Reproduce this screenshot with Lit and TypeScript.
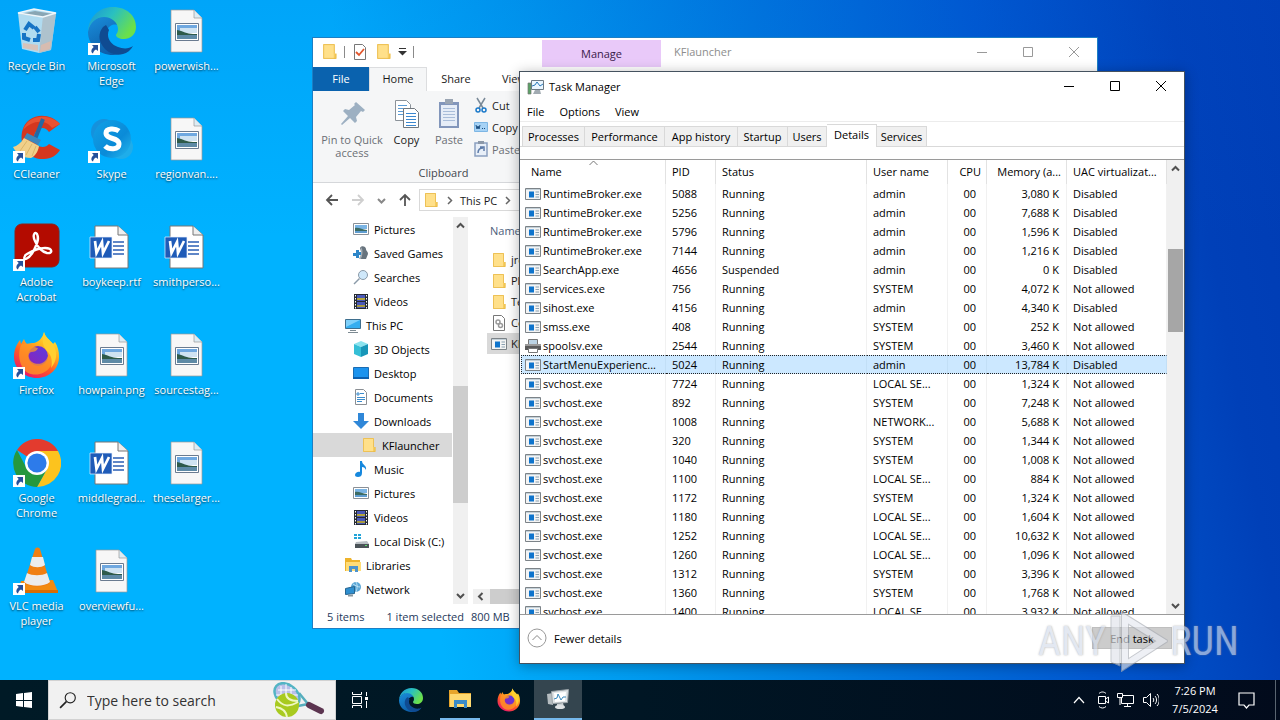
import { LitElement, html, css, svg } from "lit";
import { customElement } from "lit/decorators.js";
import { classMap } from "lit/directives/class-map.js";

const shared = css`
  * { box-sizing: border-box; }
  button, a, input {
    font: inherit; color: inherit; background: none; border: 0; margin: 0; padding: 0;
    text-decoration: none; outline: none;
  }
  svg { display: block; flex: none; }
`;

const pic = (w: number, h: number, body: unknown, vw = w, vh = h) => html`
  <svg width=${w} height=${h} viewBox="0 0 ${vw} ${vh}" fill="none" aria-hidden="true">${body}</svg>`;

/* ---------- application logos, drawn on a 48 unit grid ---------- */
const edge = (s: number) => pic(s, s, svg`
  <defs>
    <linearGradient id="e1" x1="0" y1="0" x2="1" y2=".5"><stop offset="0" stop-color="#1a92d8"/><stop offset=".5" stop-color="#29c0c0"/><stop offset="1" stop-color="#6be04a"/></linearGradient>
    <linearGradient id="e2" x1="0" y1="0" x2=".6" y2="1"><stop offset="0" stop-color="#1a8fdc"/><stop offset="1" stop-color="#0c59a4"/></linearGradient>
  </defs>
  <path fill="url(#e2)" d="M0 25C1 14 10 9 19 9c10 0 15 6 15 11-2-2-6-3-10-2-5 2-7 8-5 14 2 8 9 12 17 11 3 0 6-1 8-3-4 5-11 8-19 8C11 48 0 38 0 25z"/>
  <path fill="#0f4b92" d="M15 20c-4 5-5 12-1 18 4 7 12 11 21 9 4-1 8-4 10-8-4 3-10 3-15 1-8-3-12-10-9-17l-3-5z"/>
  <path fill="url(#e1)" d="M0 24C1 10 11 0 25 0c14 0 23 9 23 20 0 8-6 12-12 12-5 0-8-2-8-4 0-1 2-2 2-6 0-6-6-12-14-12C8 10 2 16 0 24z"/>`, 48, 48);

const firefox = (s: number) => pic(s, s, svg`
  <defs>
    <linearGradient id="f1" x1=".9" y1="0" x2=".3" y2="1"><stop offset="0" stop-color="#fff13d"/><stop offset=".35" stop-color="#ffb41f"/><stop offset=".65" stop-color="#ff5a26"/><stop offset="1" stop-color="#e9166c"/></linearGradient>
    <linearGradient id="f2" x1="1" y1="0" x2="0" y2="1"><stop offset="0" stop-color="#5a3de0"/><stop offset="1" stop-color="#8d22b9"/></linearGradient>
  </defs>
  <path fill="url(#f1)" d="M31 1c1 5 6 8 9 12l2-2c3 5 4 9 4 15 0 12-10 21-22 21S1 38 1 26C1 18 4 13 7 9l1 4 3-5c1 3 2 4 3 5 2-1 5-1 7-1 4-1 9-5 10-11z"/>
  <circle cx="25" cy="25" r="10" fill="url(#f2)"/>
  <path fill="#ff9a24" d="M8 14c3-2 8-1 11 0 2 1 4 3 6 3-1 3-4 4-7 4-2 1-3 3-2 6 2 6 11 8 16 3 4-4 4-9 2-12 5 4 7 11 3 18-4 6-12 9-19 7C9 41 3 27 8 14z" opacity=".75"/>
  <path fill="#ffcf30" d="M31 1c1 5 6 8 9 12 5 8 4 17-2 24 2-8 0-13-4-17-3-4-6-8-3-19z"/>`, 48, 48);

const chrome = () => pic(48, 48, svg`
  <path fill="#e33b2e" d="M24 24 4 11a24 24 0 0 1 41 1H24z"/>
  <path fill="#fcc31e" d="M24 12h21a24 24 0 0 1-21 36l10-18z"/>
  <path fill="#25983f" d="M4 11a24 24 0 0 0 20 37l10-18-20 0z"/>
  <circle cx="24" cy="24" r="12" fill="#fff"/><circle cx="24" cy="24" r="9.600" fill="#2d7bea"/>`);

const recycle = () => pic(48, 48, svg`
  <path fill="#dce8ee" opacity=".8" d="m5 6 16-4 22 4-5 37-12 3-17-4z"/>
  <path fill="#aebfc9" opacity=".9" d="m30 9 13-3-5 37-12 3z"/>
  <path fill="#7f98a5" opacity=".8" d="M7 7 22 4l18 3-11 3z"/>
  <path stroke="#eef6fa" stroke-width="1.500" d="M5 6 21 2l22 4-13 4z"/>
  <path fill="#e8b9a4" opacity=".7" d="m10 36 15 2v6l-15-3zM28 38l10-4-1 8-10 3z"/>
  <path stroke="#1673c4" stroke-width="4" d="m12 23 4-6 5 4M11 26l0 5 6 2M20 33h5l1-6M22 20l4 5"/>`);

const ccleaner = () => pic(48, 48, svg`
  <path fill="#d5371f" d="M47 9C36-4 13-2 9 17c-3 17 9 28 22 27 7 0 13-4 16-9l-11-6c-4 5-14 4-15-6 0-9 10-14 15-6z"/>
  <path fill="#ef5e3b" d="M47 9C37-2 15-1 10 15c8-9 22-12 29-2z" opacity=".7"/>
  <path stroke="#2468a4" stroke-width="4" d="M30 4 22 24"/>
  <path fill="#3d87bd" d="m14 18 14 7-3 5-14-7z"/>
  <path fill="#f0d08a" d="M11 23 26 31c-1 6-4 10-8 12C9 43 3 38 0 32c4-1 8-4 11-9z"/>
  <path stroke="#dcb568" d="M14 26 7 36M19 29l-6 11M23 31l-4 10"/>`);

const skype = () => pic(48, 48, svg`
  <defs><linearGradient id="s1" x1="0" y1="0" x2="1" y2="1"><stop offset="0" stop-color="#12a0e6"/><stop offset=".6" stop-color="#0a8bd8"/><stop offset="1" stop-color="#25b8ee"/></linearGradient></defs>
  <circle cx="16" cy="17" r="13" fill="#1591dc"/><circle cx="33" cy="32" r="12" fill="#1fadea"/>
  <circle cx="24" cy="24" r="19" fill="url(#s1)"/>
  <path stroke="#fff" stroke-width="5" d="M31 16c-4-3-13-3-13 2 0 7 13 4 13 11 0 6-10 6-14 2"/>`);

const acrobat = () => pic(48, 48, svg`
  <rect x="2" y="1" width="44" height="43" rx="7" fill="#b30b00" stroke="#8e2119"/>
  <path stroke="#fff" stroke-width="2.400" d="M12 33c-3 5 4 4 9-6 4-8 5-12 3-16-2-3-5 1-2 7 3 7 8 11 12 12 6 1 6-5-2-5-6 0-13 3-18 6-1 1-2 1-2 2z"/>`);

const vlc = () => pic(48, 48, svg`
  <path fill="#f28a10" d="m8 34 32-1 5 12H5z"/><path fill="#d86c04" d="M5 43h40v3H5z"/>
  <path fill="#f07f12" d="M22 2c1-2 4-2 5 0l10 34c-6 5-20 5-26 0z"/>
  <path fill="#ececec" d="m19 10 11 0 2 8c-4 3-11 3-15 0zM14 26c5 3 15 3 20 0l3 9c-6 5-20 5-26 0z"/>`);

const word = () => pic(48, 48, svg`
  <path fill="#fff" stroke="#777" d="M7 3h23l10 9v33H7z"/><path fill="#eee" stroke="#777" d="M30 3v9h10"/>
  <path stroke="#2b5fb5" stroke-width="1.500" d="M25 19h11M25 23h11M25 27h11M25 31h11"/>
  <path fill="#1f5bb8" stroke="#e8f1ff" stroke-width=".7" d="M2 14h22v21H2z"/>
  <path stroke="#fff" stroke-width="2.700" d="m7 18 1.500 12L14 19l1 11 6-12"/>`);

const image = () => pic(48, 48, svg`
  <path fill="#f7f7f7" stroke="#9a9a9a" stroke-width=".7" d="M8 3h23l8 8v34H8z"/><path fill="#dcecf4" stroke="#9a9a9a" stroke-width=".7" d="M31 3v8h8"/>
  <path fill="#fff" stroke="#6a7b90" d="M12.500 16.500h23v17h-23z"/>
  <path fill="#6fa8e0" d="M14 18h20v8H14z"/><path fill="#cfe3f2" d="M17 21h17v5H17z"/>
  <path fill="#2e5a4a" d="M14 23c6 1 10 4 16 4h4v2H14z"/><path fill="#5e8aa6" d="M14 28h20v4H14z"/>`);

const shortcut = () => pic(12, 12, svg`
  <path fill="#fff" d="M0 0h12v12H0z"/><path fill="#26519b" d="M4 2h6v6L8 6.500C6 7.500 5.500 8.500 5 10.500 2.500 9 3 6.500 5.700 4z"/>`);

/* ---------- 16 unit icons ---------- */
const folder = (s = 16) => pic(s, s, svg`<path fill="#ffe08a" d="M2 1h11v10l1 1v3H2z"/><path fill="#f7cd5e" d="M12 10h2.500v5H12z"/><path stroke="#e9b949" stroke-width=".8" d="M2.500 1.500h10V10M2.500 1.500v13h11.500V10"/>`, 16, 16);
const appIcon = () => pic(16, 16, svg`<path fill="#f4f4f4" stroke="#7c8388" d="M.5 2.500h15v11H.5z"/><path stroke="#c3d0d8" d="M1 3.500h14"/><path fill="#0f74cc" d="M4 5.500h5v6H4z"/><path stroke="#8aa0b0" d="M10.500 6h3.500M10.500 8.500h3.500M10.500 11h3.500"/>`);
const printer = () => pic(16, 16, svg`<path fill="#bcd3e4" stroke="#777" d="M3.500 1.500h9v5h-9z"/><path fill="#5a5a5a" d="M0 6h16v6H0z"/><path fill="#9a9a9a" d="M0 6h16v2H0z"/><path fill="#fff" stroke="#777" d="M3.500 10.500h9v4h-9z"/>`);
const picture = () => pic(16, 16, svg`<path fill="#fff" stroke="#8a9097" d="M.5 2.500h15v11H.5z"/><path fill="#7ab4e4" d="M2 4h12v4H2z"/><path fill="#3c6b63" d="M2 7c4-1 7 2 12 2v3H2z"/><path fill="#5f9dd1" d="M2 10h12v2H2z"/>`);
const games = () => pic(16, 16, svg`<path fill="#68747e" d="M7 3c1-3 6-2 6 1 0 2 2 2 2 5l-2 5H7l2-4z"/><path fill="#a3adb5" d="M8 2c2 3 2 6 0 12H6L8 9z"/><path fill="#2d86c8" d="M3 5h3v2h2v3H6v3H3v-2H0V8h3z"/>`);
const search = (c = "#8a9aa8", f = "#cfe8fa", s = 16) => pic(s, s, svg`<circle cx="10" cy="6" r="4.500" fill=${f} stroke=${c}/><path stroke=${c} stroke-width="1.500" d="M6.500 9.500 1 15"/>`, 16, 16);
const video = () => pic(16, 16, svg`<path fill="#252a33" d="M1 1h14v15H1z"/><path fill="#4a59b8" d="M4 2h8v6H4z"/><path fill="#b5a63b" d="M4 5h8v2H4z"/><path fill="#4a59b8" d="M4 9h8v6H4z"/><path fill="#a79a3f" d="M4 12h8v2H4z"/><path stroke="#fff" stroke-dasharray="1.500 1.500" d="M2.500 2v14M13.500 2v14"/>`);
const pc = () => pic(16, 16, svg`<path fill="#35aef0" stroke="#3f6f8e" d="M.5 2.500h15v9H.5z"/><path fill="#7fd0fa" d="M1 3h14L1 10z"/><path stroke="#7d8a92" d="M5 13.500h6M3 15.500h10"/>`);
const cube = () => pic(16, 16, svg`<path fill="#8be3ee" d="m8 0 7 3-7 3-7-3z"/><path fill="#35bfd6" d="m1 3 7 3v10l-7-3z"/><path fill="#1796b8" d="m15 3-7 3v10l7-3z"/>`);
const desk = () => pic(16, 16, svg`<path fill="#1c93ee" stroke="#1a6cb3" d="M.5 2.500h15v10H.5z"/><path fill="#0d5fae" d="M0 12h16v2H0z"/>`);
const doc = () => pic(16, 16, svg`<path fill="#fff" stroke="#8a8f94" d="M2.500.5h8l3 3v12h-11z"/><path stroke="#3c8ccc" d="M7 4.500h4M4 4h2v2H4zM4 8.500h8M4 10.500h8M4 12.500h5"/>`);
const down = () => pic(16, 16, svg`<path fill="#2f87d8" d="M5 0h6v8h5l-8 8-8-8h5z"/>`);
const music = () => pic(16, 16, svg`<path fill="#1688dd" d="M7 0h2c0 4 5 4 4 9-1-2-2-3-4-3v6c0 3-2 4-4 4s-3-1-3-2c0-2 3-4 5-3z"/>`);
const disk = () => pic(16, 16, svg`<path fill="#22a4d8" d="M1 1h3v2H1zM5 1h3v2H5zM1 4h3v2H1zM5 4h3v2H5z"/><path fill="#b9bfc4" d="m3 9 11-1 2 3H2z"/><path fill="#4b5358" d="M2 11h14v4H2z"/><path fill="#5be06a" d="M12 12h2v1h-2z"/>`);
const library = () => pic(16, 16, svg`<path fill="#eeb32b" d="M0 1h6l1 2h8v11H0z"/><path fill="#ffdc77" d="M1 5h15v9H1z"/><path fill="#4c93cc" d="M4 9h9v6h-3v-3H7v3H4z"/>`);
const network = () => pic(16, 16, svg`<circle cx="11" cy="6" r="5" fill="#5ba7d6"/><path stroke="#bfe2f5" d="M8 3c3 2 5 3 7 3M11 1c2 4 1 7 0 10"/><path fill="#2e8fd0" stroke="#27648e" d="m.5 7.500 9-2v7l-9 1z"/><path fill="#8a979e" d="m3 14 5-.5v2H3z"/>`);
const config = () => pic(16, 16, svg`<path fill="#fff" stroke="#777" d="M2.500.5h8l3 3v12h-11z"/><circle cx="7" cy="7" r="2" stroke="#999" stroke-width="1.500"/><circle cx="9.500" cy="10.500" r="2" stroke="#999" stroke-width="1.500"/>`);
const chevron = (d: string, c = "#505050", w = 2) => pic(9, 9, svg`<path stroke=${c} stroke-width=${w} d=${d}/>`);
const UP = "M1 6.500 4.500 3 8 6.500", DOWN = "M1 3 4.500 6.500 8 3", LEFT = "M6.500 1 3 4.500 6.500 8", RIGHT = "M3 1 6.500 4.500 3 8";

const caption = (c: string) => html`
  <div class="caption">
    <button aria-label="Minimize">${pic(11, 11, svg`<path stroke=${c} d="M0 5.500h10"/>`)}</button>
    <button aria-label="Maximize">${pic(11, 11, svg`<path stroke=${c} d="M.5.5h9v9h-9z"/>`)}</button>
    <button aria-label="Close">${pic(11, 11, svg`<path stroke=${c} d="m0 0 10 10M10 0 0 10"/>`)}</button>
  </div>`;
const captionStyle = css`
  .caption { display: flex; margin-left: auto; }
  .caption button { width: 46px; height: 28px; display: grid; place-items: center; }
`;

@customElement("desktop-icons")
class DesktopIcons extends LitElement {
  static styles = [shared, css`
    :host { display: block; height: 100%; }
    .grid { display: grid; grid-auto-flow: column; grid-template-rows: repeat(6, 108px); grid-auto-columns: 75px; justify-content: start; }
    .item { display: flex; flex-direction: column; align-items: center; gap: 3px; padding: 7px 2px 0 0; color: #fff; text-align: center; }
    .art { position: relative; }
    .badge { position: absolute; left: 0; bottom: 0; }
    .label { font-size: 11px; line-height: 15px; text-shadow: 0 1px 2px rgba(0, 0, 0, .7); }
  `];
  items: [string, () => unknown, boolean][] = [
    ["Recycle Bin", recycle, false], ["CCleaner", ccleaner, true], ["Adobe Acrobat", acrobat, true],
    ["Firefox", () => firefox(48), true], ["Google Chrome", chrome, true], ["VLC media player", vlc, true],
    ["Microsoft Edge", () => edge(48), true], ["Skype", skype, true], ["boykeep.rtf", word, false],
    ["howpain.png", image, false], ["middlegrad...", word, false], ["overviewfu...", image, false],
    ["powerwish...", image, false], ["regionvan....", image, false], ["smithperso...", word, false],
    ["sourcestag...", image, false], ["theselarger...", image, false],
  ];
  render() {
    return html`<div class="grid">${this.items.map(([label, art, link]) => html`
      <a class="item" href="#"><span class="art">${art()}${link ? html`<span class="badge">${shortcut()}</span>` : ""}</span><span class="label">${label}</span></a>`)}</div>`;
  }
}

@customElement("file-explorer")
class FileExplorer extends LitElement {
  static styles = [shared, captionStyle, css`
    :host { display: flex; flex-direction: column; background: #fff; border: 1px solid #1c7fc4; font-size: 11px; color: #1a1a1a; white-space: nowrap; overflow: hidden; }
    .title { display: flex; height: 29px; }
    .quick { display: flex; align-items: center; gap: 6px; width: 229px; padding: 0 0 2px 8px; flex: none; }
    .sep { width: 1px; height: 12px; background: #8a8a8a; }
    .manage { width: 119px; margin-top: 2px; background: #e9c9f9; color: #3a1a4a; display: grid; place-items: center; flex: none; }
    .name { padding: 0 0 2px 13px; color: #8d8d8d; align-self: center; }
    .tabs { display: flex; height: 24px; }
    .tabs button { width: 58px; padding-bottom: 2px; }
    .tabs .file { width: 56px; background: #0a62ae; color: #fff; }
    .tabs .home { background: #f5f6f7; border: 1px solid #dcdddf; border-bottom: 0; }
    .ribbon { background: #f5f6f7; border-bottom: 1px solid #d5d7da; height: 92px; }
    .group { width: 261px; display: flex; flex-direction: column; height: 100%; }
    .tools { display: flex; flex: 1; }
    .tools button.big { display: flex; flex-direction: column; align-items: center; line-height: 13px; gap: 3px; padding-top: 7px; white-space: normal; width: 42px; }
    .tools button.pin { width: 78px; }
    .tools button.copy { width: 31px; margin-right: 6px; }
    .dim { color: #6b6f75; }
    .small { display: flex; flex-direction: column; padding: 3px 0 0 4px; }
    .small button { display: flex; align-items: center; gap: 4px; height: 22px; }
    .group-name { text-align: center; line-height: 18px; color: #44484e; }
    .path { display: flex; align-items: center; height: 34px; padding-left: 12px; gap: 12px; }
    .path button { display: grid; place-items: center; }
    .address { flex: 1; display: flex; align-items: center; height: 22px; border: 1px solid #d9d9d9; gap: 6px; padding-left: 3px; margin-left: -5px; }
    .main { display: flex; flex: 1; min-height: 0; }
    nav { width: 140px; }
    nav a { display: flex; align-items: center; gap: 5px; height: 24px; padding-left: 40px; color: #000; }
    nav a.top { padding-left: 32px; }
    nav a.deep { padding-left: 48px; background: #d9d9d9; margin-right: 1px; }
    .vbar { width: 15px; display: flex; flex-direction: column; align-items: center; background: #f0f0f0; padding: 4px 0; }
    .vbar .thumb { width: 15px; height: 117px; background: #cdcdcd; margin-top: auto; margin-bottom: 88px; }
    .files { flex: 1; padding-left: 19px; display: flex; flex-direction: column; }
    .head { color: #4c607a; line-height: 28px; padding-left: 3px; margin-bottom: 4px; }
    .files a { display: flex; align-items: center; gap: 4px; height: 21px; padding-left: 4px; }
    .files a.sel { background: #d9d9d9; }
    .hbar { display: flex; align-items: center; height: 15px; margin: auto 0 0 -14px; background: #f0f0f0; padding-left: 3px; gap: 5px; }
    .hbar .thumb { background: #cdcdcd; width: 400px; height: 15px; }
    .status { display: flex; height: 24px; align-items: center; padding-left: 14px; gap: 22px; color: #1e395b; }
    .status .size { margin-left: -15px; }
  `];
  tree: [string, () => unknown, string][] = [
    ["Pictures", picture, ""], ["Saved Games", games, ""], ["Searches", () => search(), ""], ["Videos", video, ""],
    ["This PC", pc, "top"], ["3D Objects", cube, ""], ["Desktop", desk, ""], ["Documents", doc, ""], ["Downloads", down, ""],
    ["KFlauncher", () => folder(), "deep"], ["Music", music, ""], ["Pictures", picture, ""], ["Videos", video, ""],
    ["Local Disk (C:)", disk, ""], ["Libraries", library, "top"], ["Network", network, "top"],
  ];
  files: [string, () => unknown][] = [["jre", () => folder()], ["Plugins", () => folder()], ["Temp", () => folder()], ["Config", config], ["KFlauncher", appIcon]];
  arrow(d: string, c: string) { return pic(14, 14, svg`<path stroke=${c} stroke-width="1.800" d=${d}/>`); }
  render() {
    return html`
      <div class="title">
        <div class="quick">${folder(17)}<span class="sep"></span>
          ${pic(18, 16, svg`<path fill="#fff" stroke="#777" d="M3.500.5h8l3 3v12h-11z"/><path stroke="#e2562c" stroke-width="1.800" d="m5 8 3 3 5-6"/>`)}
          ${folder(17)}
          ${pic(9, 8, svg`<path stroke="#333" d="M1 .5h7"/><path fill="#333" d="M0 3h9L4.500 7.500z"/>`)}
          <span class="sep"></span>
        </div>
        <div class="manage">Manage</div><div class="name">KFlauncher</div>
        ${caption("#999")}
      </div>
      <div class="tabs"><button class="file">File</button><button class="home">Home</button><button>Share</button><button>View</button></div>
      <div class="ribbon"><div class="group">
        <div class="tools">
          <button class="big pin dim">${pic(30, 32, svg`<path fill="#9db0c2" d="m19 4 9 8-2 2-2-1-5 6 1 4-2 2-5-5-8 7-1-1 7-8-5-5 2-2 4 1 6-5-1-1z"/>`)}Pin to Quick access</button>
          <button class="big copy">${pic(28, 32, svg`<path fill="#fff" stroke="#8b9299" d="M2.500 2.500h11l4 4v16h-15z"/><path stroke="#5b9bd5" d="M5 7.500h9M5 10.500h9M5 13.500h9M5 16.500h9"/><path fill="#fff" stroke="#70777e" d="M10.500 10.500h11l4 4v15h-15z"/><path stroke="#3b87cf" d="M13 15.500h10M13 18.500h10M13 21.500h10M13 24.500h10M13 27.500h10"/>`)}Copy</button>
          <button class="big dim">${pic(22, 32, svg`<path fill="#8296bb" d="M1 4h20v26H1z"/><path fill="#e6edf7" d="M3 7h16v21H3z"/><path fill="#9aa5b3" d="M7 1h8v5H7z"/><path stroke="#a9bdd9" d="M5 10.500h12M5 13.500h12M5 16.500h12M5 19.500h12M5 22.500h12"/>`)}Paste</button>
          <div class="small">
            <button>${pic(14, 16, svg`<path stroke="#7a8a98" stroke-width="1.500" d="m3 1 6 10M11 1 5 11"/><circle cx="4" cy="13" r="2" stroke="#1979ca" stroke-width="1.500"/><circle cx="10" cy="13" r="2" stroke="#1979ca" stroke-width="1.500"/>`)}Cut</button>
            <button>${pic(14, 10, svg`<path fill="#a6d2f5" stroke="#7db6e4" d="M.5.5h13v9H.5z"/><path stroke="#1a4d80" d="m2 3 1 4 1-3 1 3 1-4M8 6.500h1M10 6.500h1"/>`)}Copy path</button>
            <button class="dim">${pic(14, 16, svg`<path fill="#e8eff8" stroke="#8aa0c0" stroke-width="1.500" d="M1 2h12v13H1z"/><path fill="#8c98a8" d="M4 0h6v3H4z"/><path stroke="#5d7ba8" stroke-width="1.500" d="M4 12c0-4 2-5 5-5M6 6h4v4"/>`)}Paste shortcut</button>
          </div>
        </div>
        <div class="group-name">Clipboard</div>
      </div></div>
      <div class="path">
        <button aria-label="Back">${this.arrow("M13 7H2M7 2 2 7l5 5", "#555")}</button>
        <button aria-label="Forward">${this.arrow("M1 7h11M7 2l5 5-5 5", "#cfcfcf")}</button>
        <button aria-label="Recent">${chevron(DOWN, "#888")}</button>
        <button aria-label="Up">${this.arrow("M7 13V2M2 7l5-5 5 5", "#555")}</button>
        <div class="address">${folder()}${chevron(RIGHT, "#666", 1.5)}<span>This PC</span>${chevron(RIGHT, "#666", 1.5)}</div>
      </div>
      <div class="main">
        <nav>${this.tree.map(([t, i, c]) => html`<a href="#" class=${c}>${i()}${t}</a>`)}</nav>
        <div class="vbar">${chevron(UP)}<div class="thumb"></div>${chevron(DOWN)}</div>
        <div class="files">
          <div class="head">Name</div>
          ${this.files.map(([t, i]) => html`<a href="#" class=${classMap({ sel: t === "KFlauncher" })}>${i()}${t}</a>`)}
          <div class="hbar">${chevron(LEFT)}<div class="thumb"></div></div>
        </div>
      </div>
      <div class="status"><span>5 items</span><span>1 item selected</span><span class="size">800 MB</span></div>`;
  }
}

@customElement("task-manager")
class TaskManager extends LitElement {
  static styles = [shared, captionStyle, css`
    :host { display: flex; flex-direction: column; background: #fff; border: 1px solid #45525f; font-size: 11px; color: #000; white-space: nowrap; overflow: hidden; }
    .title { display: flex; height: 29px; padding-left: 7px; gap: 5px; align-items: center; }
    .menu { display: flex; height: 21px; padding-left: 7px; gap: 15px; border-bottom: 1px solid #ececec; align-items: center; }
    .tabs { display: flex; align-items: flex-end; height: 25px; padding-left: 2px; border-bottom: 1px solid #d9d9d9; }
    .tabs button { height: 20px; width: 50px; background: #f0f0f0; border: 1px solid #d9d9d9; border-left-width: 0; border-bottom: 0; }
    .tabs button.w63 { width: 63px; border-left-width: 1px; }
    .tabs button.w80 { width: 80px; }
    .tabs button.w73 { width: 73px; }
    .tabs button.w38 { width: 39px; }
    .tabs button.on { height: 23px; width: 50px; background: #fff; margin-bottom: -1px; padding-bottom: 3px; }
    .list { flex: 1; display: flex; margin-top: 12px; min-height: 0; border-top: 1px solid #9a9a9a; border-bottom: 1px solid #9a9a9a; }
    .view { flex: 1; overflow: hidden; padding-left: 1px; }
    table { border-collapse: separate; border-spacing: 0; table-layout: fixed; width: 100%; }
    th, td { padding: 0 0 0 6px; height: 19px; line-height: 19px; text-align: left; font-weight: 400; border-right: 1px solid #f1f1f1; overflow: hidden; text-overflow: ellipsis; }
    th { height: 24px; border-right-color: #e2e2e2; position: relative; padding-bottom: 2px; }
    th:first-child { padding-left: 10px; }
    td:first-child { padding-left: 4px; }
    .proc { display: flex; align-items: center; gap: 2px; }
    .sort { position: absolute; left: 68px; top: 0; }
    td.num, th.num { text-align: right; padding-right: 7px; padding-left: 0; }
    td.cpu { padding-right: 10px; }
    th.num { padding-right: 5px; }
    .sel td { background: #cce8ff; border-top: 1px dotted #222; border-bottom: 1px dotted #222; border-right-color: #c2dff6; line-height: 17px; }
    .sel td:first-child { border-left: 1px dotted #222; padding-left: 3px; }
    .bar { width: 17px; display: flex; flex-direction: column; align-items: center; background: #f0f0f0; padding: 4px 0; justify-content: space-between; }
    .thumb { width: 15px; height: 83px; background: #a6a6a6; margin-bottom: 193px; }
    .foot { height: 48px; display: flex; align-items: center; justify-content: space-between; padding: 0 12px 2px 7px; }
    .fewer { display: flex; align-items: center; gap: 7px; }
    .end { width: 80px; height: 22px; background: #ccc; border: 1px solid #bfbfbf; }
  `];
  rows = `RuntimeBroker.exe|5088|admin|3,080
RuntimeBroker.exe|5256|admin|7,688
RuntimeBroker.exe|5796|admin|1,596
RuntimeBroker.exe|7144|admin|1,216
SearchApp.exe|4656|admin|0
services.exe|756|SYSTEM|4,072
sihost.exe|4156|admin|4,340
smss.exe|408|SYSTEM|252
spoolsv.exe|2544|SYSTEM|3,460
StartMenuExperienc...|5024|admin|13,784
svchost.exe|7724|LOCAL SE...|1,324
svchost.exe|892|SYSTEM|7,248
svchost.exe|1008|NETWORK...|5,688
svchost.exe|320|SYSTEM|1,344
svchost.exe|1040|SYSTEM|1,008
svchost.exe|1100|LOCAL SE...|884
svchost.exe|1172|SYSTEM|1,324
svchost.exe|1180|LOCAL SE...|1,604
svchost.exe|1252|LOCAL SE...|10,632
svchost.exe|1260|LOCAL SE...|1,096
svchost.exe|1312|SYSTEM|3,396
svchost.exe|1360|SYSTEM|1,768
svchost.exe|1400|LOCAL SE...|3,932`.split("\n").map((r) => r.split("|"));
  render() {
    return html`
      <div class="title">${pic(17, 16, svg`<path fill="#5ba266" stroke="#777" stroke-width=".7" d="M1 4h3v11H1z"/><path fill="#eaf6ff" stroke="#6d7a84" d="M4.500 1.500h12v9h-12z"/><path stroke="#2979b9" d="m5 7 3-1 2-3 3 4 3-2"/><path fill="#a2abb2" d="M8 11h5l1 4H6z"/>`)}<span>Task Manager</span>${caption("#000")}</div>
      <div class="menu"><button>File</button><button>Options</button><button>View</button></div>
      <div class="tabs">
        <button class="w63">Processes</button><button class="w80">Performance</button><button class="w73">App history</button><button>Startup</button>
        <button class="w38">Users</button><button class="on">Details</button><button>Services</button>
      </div>
      <div class="list">
        <div class="view"><table>
          <colgroup><col width="145"><col width="50"><col width="151"><col width="81"><col width="39"><col width="80"><col></colgroup>
          <thead><tr><th>Name<span class="sort">${pic(9, 6, svg`<path stroke="#777" d="m.5 5 4-4 4 4"/>`)}</span></th><th>PID</th><th>Status</th><th>User name</th><th class="num">CPU</th><th class="num">Memory (a...</th><th>UAC virtualizat...</th></tr></thead>
          <tbody>${this.rows.map(([n, pid, user, mem]) => html`
            <tr class=${classMap({ sel: pid === "5024" })}>
              <td><span class="proc">${n === "spoolsv.exe" ? printer() : appIcon()}${n}</span></td><td>${pid}</td>
              <td>${pid === "4656" ? "Suspended" : "Running"}</td><td>${user}</td><td class="num cpu">00</td><td class="num">${mem} K</td>
              <td>${user === "admin" ? "Disabled" : "Not allowed"}</td></tr>`)}</tbody>
        </table></div>
        <div class="bar">${chevron(UP)}<div class="thumb"></div>${chevron(DOWN)}</div>
      </div>
      <div class="foot">
        <button class="fewer">${pic(20, 20, svg`<circle cx="10" cy="10" r="9" stroke="#999"/><path stroke="#888" d="m5.500 12 4.500-4.500 4.500 4.500"/>`)}Fewer details</button>
        <button class="end">End task</button>
      </div>`;
  }
}

@customElement("task-bar")
class TaskBar extends LitElement {
  static styles = [shared, css`
    :host { display: flex; height: 40px; background: linear-gradient(90deg, #001a26, #001624 50%, #020b1c); color: #fff; font-size: 12px; }
    button { display: grid; place-items: center; }
    .start, .app { width: 48px; height: 40px; }
    .search { width: 288px; display: flex; align-items: center; gap: 10px; padding: 0 10px 0 10px; background: #f1f1f1; border: 1px solid #d2d2d2; }
    .search input { flex: 1; min-width: 0; font-size: 14px; color: #333; }
    .search input::placeholder { color: #333; opacity: 1; }
    .apps { display: flex; gap: 1px; padding-left: 3px; }
    .run { border-bottom: 2px solid #76b9ed; width: 40px; margin: 0 4px; }
    .active { background: #34454f; border-bottom: 2px solid #76b9ed; }
    .tray { display: flex; align-items: center; margin-left: auto; gap: 8px; }
    .up { margin-right: 4px; }
    .clock { text-align: center; line-height: 18px; width: 56px; font-size: 11px; }
    .note { width: 48px; height: 40px; margin: 0 -4px 0 -8px; }
    .peek { width: 5px; height: 40px; border-left: 1px solid #5a6570; }
  `];
  render() {
    return html`
      <button class="start" aria-label="Start">${pic(16, 16, svg`<path fill="#fff" d="m0 2 7-1v7H0zM8 1l8-1v8H8zM0 9h7v6l-7-1zM8 9h8v7l-8-1z"/>`)}</button>
      <label class="search">${search("#222", "none", 18)}<input type="text" aria-label="Search" placeholder="Type here to search">
        ${pic(54, 36, svg`<ellipse cx="16" cy="13" rx="10" ry="14" transform="rotate(-50 16 13)" fill="#b9bfe8" stroke="#53b4c4" stroke-width="2.500"/><path stroke="#fff" d="M7 8h18M5 13h22M8 18h18M10 4v20M15 2v20M20 5v18"/><path stroke="#56aebd" stroke-width="2.500" d="m28 11 9 11M22 25l15-3"/><path stroke="#5c3550" stroke-width="6" stroke-linecap="round" d="m38 23 12 6"/><circle cx="16" cy="23" r="12" fill="#a8ca1f"/><path stroke="#eef7c2" stroke-width="2" d="M6 17c6 8 12 8 21 3M15 11c0 6 6 8 12 8M5 25c6 1 10 4 11 10"/>`)}
      </label>
      <button class="app" aria-label="Task View">${pic(18, 18, svg`<path stroke="#fff" d="M1.500 5.500h9v7h-9zM1.500 1v2.500h9V1M1.500 17v-2.500h9V17M15.500 1v4M15.500 10v7"/><path fill="#fff" d="M14 6h3v3h-3z"/>`)}</button>
      <div class="apps">
        <button class="app" aria-label="Edge">${edge(24)}</button>
        <button class="app run" aria-label="File Explorer">${pic(22, 20, svg`<path fill="#e7a52b" d="M0 1h8l2 3h12v14H0z"/><path fill="#ffd970" d="M1 5h21v13H1z"/><path fill="#3b8bc8" d="M5 11h13v8h-3v-4H8v4H5z"/>`)}</button>
        <button class="app" aria-label="Firefox">${firefox(24)}</button>
        <button class="app active" aria-label="Task Manager">${pic(24, 24, svg`<path fill="#b6bdc1" d="m1 7 6-1v12l-5-1z"/><path fill="#dfe3e5" stroke="#9aa2a7" d="m5.500 4.500 17-2-1 13-15 1z"/><path fill="#fff" d="m8 6 12-1-1 9-10 1z"/><path stroke="#3a88bb" d="m8 12 3-1 1-4 3 6 2-3h3"/><path fill="#c9cfd2" d="m11 17 6-1 1 4-7 1z"/><ellipse cx="14" cy="20" rx="5" ry="2" fill="#dfe3e5"/>`)}</button>
      </div>
      <div class="tray">
        <div class="up">${pic(12, 8, svg`<path stroke="#fff" stroke-width="1.200" d="m1 7 5-5.500L11 7"/>`)}</div>
        ${pic(12, 18, svg`<path stroke="#fff" d="M1.500 5.500h7v7h-7zM8.500 8l3-2v6l-3-2M2 2.500c2-2 5-2 7 0M2 15.500c2 2 5 2 7 0"/>`)}
        ${pic(17, 16, svg`<path stroke="#fff" d="M4.500 3.500h12v8h-12zM7 14.500h7M10.500 12v2"/><path fill="#020b1c" stroke="#fff" d="M.5 1.500h5v4h-5z"/><path stroke="#fff" d="M3 6v7"/>`)}
        ${pic(17, 16, svg`<path stroke="#fff" d="M1.500 5.500h3l4-4v13l-4-4h-3zM11 6c1 1 1 3 0 4M13 4c2 2 2 6 0 8M15 2c3 3 3 9 0 12"/>`)}
        <div class="clock">7:26 PM<br>7/5/2024</div>
        <button class="note" aria-label="Notifications">${pic(18, 17, svg`<path stroke="#fff" stroke-width="1.200" d="M1 1h15v12h-5l-2.500 3L6 13H1z"/>`)}</button>
        <div class="peek"></div>
      </div>`;
  }
}

@customElement("app-root")
class AppRoot extends LitElement {
  static styles = [shared, css`
    :host { display: flex; flex-direction: column; height: 100vh; overflow: hidden; font-family: "Open Sans", "Noto Sans", sans-serif; }
    .desktop { flex: 1; position: relative; min-height: 0;
      background: linear-gradient(180deg, rgba(0, 90, 215, .15), transparent 35%), linear-gradient(80deg, #00b2ff 0%, #00b2ff 32%, #009aef 46%, #0078de 62%, #0058d0 78%, #0040b8 92%, #003cb4 100%); }
    file-explorer { position: absolute; left: 312px; top: 37px; width: 786px; height: 592px; }
    task-manager { position: absolute; left: 519px; top: 71px; width: 666px; height: 593px; box-shadow: 0 2px 12px rgba(0, 0, 0, .3); }
    .mark { position: absolute; left: 1038px; top: 612px; display: flex; align-items: center; gap: 2px; opacity: .65; pointer-events: none;
      font: 40px/56px "Roboto Condensed", Roboto, "Liberation Sans", sans-serif; color: #d5dcea; text-shadow: 0 0 2px #888; }
  `];
  render() {
    return html`
      <div class="desktop">
        <desktop-icons></desktop-icons>
        <file-explorer></file-explorer>
        <task-manager></task-manager>
        <div class="mark"><span>ANY</span>${pic(60, 60, svg`<path fill="#dfe3ea" stroke="#a9adb5" d="M3 4h9v50l-9-4z"/><path stroke="#a9adb5" stroke-width="8" d="M17 6 54 29 17 53z"/><path stroke="#e6e9f0" stroke-width="6" d="M17 6 54 29 17 53z"/>`)}<span>RUN</span></div>
      </div>
      <task-bar></task-bar>`;
  }
}
